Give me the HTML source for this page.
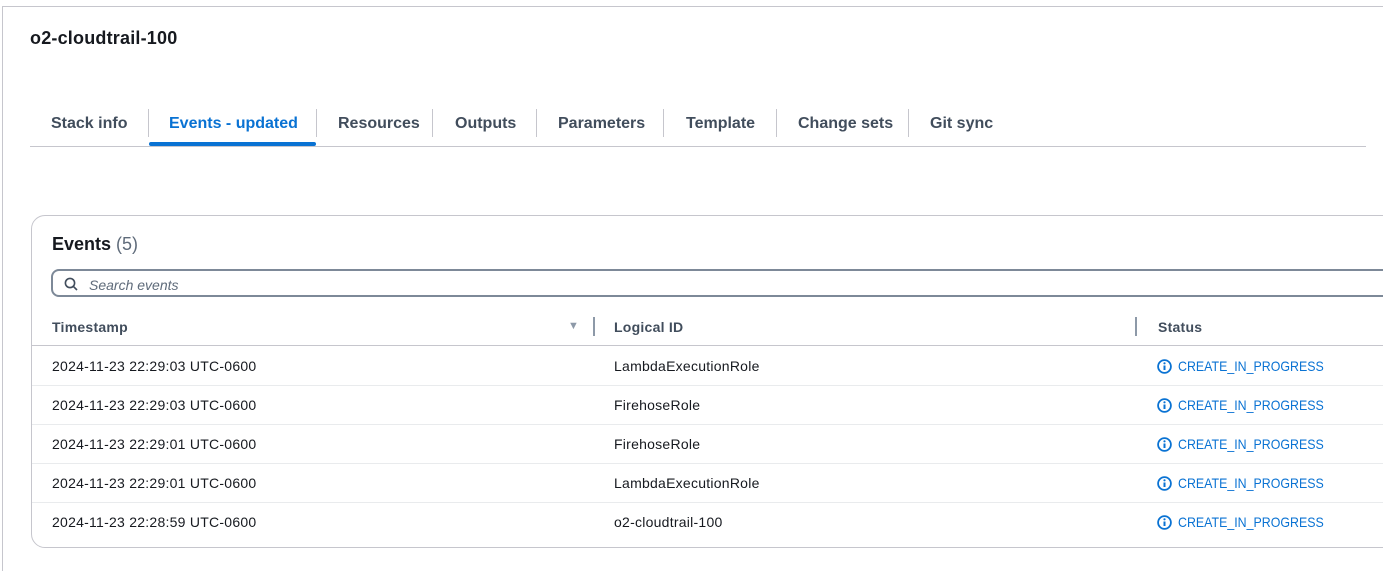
<!DOCTYPE html>
<html><head><style>
html,body{margin:0;width:1383px;height:571px;overflow:hidden}
body{background:#fff;font-family:"Liberation Sans",sans-serif;color:#16191f;position:relative}
.frame{position:absolute;left:2px;top:6px;width:1400px;height:570px;border-left:1px solid #c6c6cd;border-top:1px solid #c6c6cd}
.abs{position:absolute;white-space:nowrap}
.title{left:30px;top:28px;font-size:18px;font-weight:bold;letter-spacing:0.2px}
.tab{top:115px;font-size:16px;font-weight:bold;color:#414d5c}
.sep{position:absolute;top:109px;width:1px;height:28px;background:#c6c6cd}
.card{position:absolute;left:31px;top:215px;width:1400px;height:331px;border:1px solid #c6c6cd;border-radius:14px}
.row{position:absolute;left:32px;width:1351px;height:1px;background:#e9ebed}
.c{font-size:14px;color:#16191f;letter-spacing:0.25px}
.st{font-size:14px;color:#0972d3;transform:scaleX(0.885);transform-origin:0 0}
</style></head><body>
<div class="frame"></div>
<div class="abs title">o2-cloudtrail-100</div>
<div class="abs tab" style="left:51px">Stack info</div>
<div class="abs tab" style="left:169px;color:#0972d3">Events - updated</div>
<div class="abs tab" style="left:338px">Resources</div>
<div class="abs tab" style="left:455px">Outputs</div>
<div class="abs tab" style="left:558px">Parameters</div>
<div class="abs tab" style="left:686px">Template</div>
<div class="abs tab" style="left:798px">Change sets</div>
<div class="abs tab" style="left:930px">Git sync</div>
<div class="sep" style="left:148px"></div><div class="sep" style="left:316px"></div><div class="sep" style="left:432px"></div><div class="sep" style="left:536px"></div><div class="sep" style="left:663px"></div><div class="sep" style="left:776px"></div><div class="sep" style="left:908px"></div>
<div class="abs" style="left:30px;top:146px;width:1336px;height:1px;background:#c6c6cd"></div>
<div class="abs" style="left:149px;top:142px;width:167px;height:4px;background:#0972d3;border-radius:2px"></div>
<div class="card"></div>
<div class="abs" style="left:52px;top:234px;font-size:18px;font-weight:bold">Events <span style="font-weight:normal;color:#5f6b7a">(5)</span></div>
<div class="abs" style="left:51px;top:269px;width:1400px;height:28px;border:2px solid #7d8998;border-radius:8px;box-sizing:border-box"></div>
<svg class="abs" style="left:64px;top:277px" width="14" height="14" viewBox="0 0 14 14"><circle cx="6" cy="6" r="4.6" fill="none" stroke="#414d5c" stroke-width="1.6"/><line x1="9.4" y1="9.4" x2="13" y2="13" stroke="#414d5c" stroke-width="1.6"/></svg>
<div class="abs" style="left:89px;top:277px;font-size:14px;font-style:italic;color:#5f6b7a">Search events</div>
<div class="abs c" style="left:52px;top:319px;font-weight:bold;color:#414d5c">Timestamp</div>
<div class="abs" style="left:568px;top:320px;font-size:11px;color:#8d99a8">▼</div>
<div class="abs" style="left:593px;top:317px;width:2px;height:19px;background:#8d99a8"></div>
<div class="abs c" style="left:614px;top:319px;font-weight:bold;color:#414d5c">Logical ID</div>
<div class="abs" style="left:1135px;top:317px;width:2px;height:19px;background:#8d99a8"></div>
<div class="abs c" style="left:1158px;top:319px;font-weight:bold;color:#414d5c">Status</div>
<div class="row" style="top:345px;background:#c6c6cd"></div>
<div class="row" style="top:385px"></div><div class="row" style="top:424px"></div><div class="row" style="top:463px"></div><div class="row" style="top:502px"></div>
<div class="abs c" style="left:52px;top:358px">2024-11-23 22:29:03 UTC-0600</div>
<div class="abs c" style="left:52px;top:397px">2024-11-23 22:29:03 UTC-0600</div>
<div class="abs c" style="left:52px;top:436px">2024-11-23 22:29:01 UTC-0600</div>
<div class="abs c" style="left:52px;top:475px">2024-11-23 22:29:01 UTC-0600</div>
<div class="abs c" style="left:52px;top:514px">2024-11-23 22:28:59 UTC-0600</div>
<div class="abs c" style="left:614px;top:358px">LambdaExecutionRole</div>
<div class="abs c" style="left:614px;top:397px">FirehoseRole</div>
<div class="abs c" style="left:614px;top:436px">FirehoseRole</div>
<div class="abs c" style="left:614px;top:475px">LambdaExecutionRole</div>
<div class="abs c" style="left:614px;top:514px">o2-cloudtrail-100</div>
<svg class="abs" style="left:1157px;top:359px" width="15" height="171" viewBox="0 0 15 171">
<g fill="none" stroke="#0972d3" stroke-width="1.8">
<circle cx="7.5" cy="7.5" r="6.4"/><circle cx="7.5" cy="46.5" r="6.4"/><circle cx="7.5" cy="85.5" r="6.4"/><circle cx="7.5" cy="124.5" r="6.4"/><circle cx="7.5" cy="163.5" r="6.4"/>
<path d="M7.5 6.5v4.5M7.5 45.5v4.5M7.5 84.5v4.5M7.5 123.5v4.5M7.5 162.5v4.5" stroke-width="2"/>
</g>
<g fill="#0972d3"><circle cx="7.5" cy="4.3" r="1.1"/><circle cx="7.5" cy="43.3" r="1.1"/><circle cx="7.5" cy="82.3" r="1.1"/><circle cx="7.5" cy="121.3" r="1.1"/><circle cx="7.5" cy="160.3" r="1.1"/></g>
</svg>
<div class="abs st" style="left:1178px;top:358px">CREATE_IN_PROGRESS</div>
<div class="abs st" style="left:1178px;top:397px">CREATE_IN_PROGRESS</div>
<div class="abs st" style="left:1178px;top:436px">CREATE_IN_PROGRESS</div>
<div class="abs st" style="left:1178px;top:475px">CREATE_IN_PROGRESS</div>
<div class="abs st" style="left:1178px;top:514px">CREATE_IN_PROGRESS</div>
</body></html>
